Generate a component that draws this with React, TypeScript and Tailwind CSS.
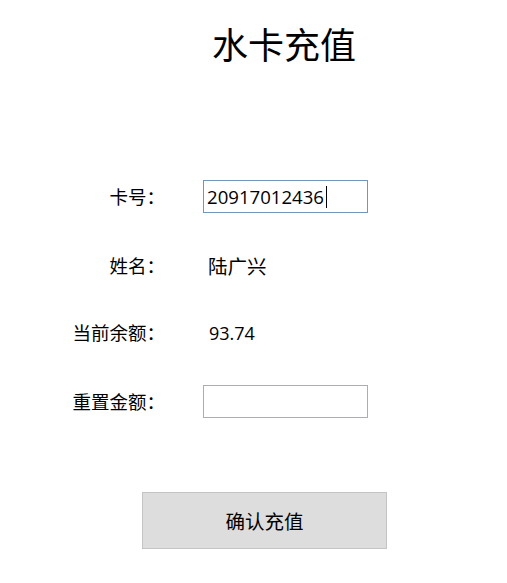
export default function App() {
  const font = { fontFamily: '"Noto Sans CJK SC", sans-serif' }

  return (
    <div className="w-[507px] h-[583px] bg-white text-black" style={font}>
      {/* 标题 */}
      <div className="pt-[20px] pl-[212px] h-[180px]">
        <h1 className="text-[36px] leading-[46px] font-normal">水卡充值</h1>
      </div>

      <div className="flex flex-col">
        {/* 卡号 */}
        <div className="flex items-center h-[33px]">
          <div className="w-[165px] text-right text-[18.5px] leading-none">卡号：</div>
          <div className="ml-[38px] w-[165px] h-[33px] border border-[#569de5] flex items-center pl-[3px] text-[18.6px] font-['Open_Sans',sans-serif]">
            <span>20917012436</span>
            <span className="w-px h-[22px] bg-black ml-[2px]" />
          </div>
        </div>

        {/* 姓名 */}
        <div className="flex items-center h-[33px] mt-[36px]">
          <div className="w-[165px] text-right text-[18.5px] leading-none">姓名：</div>
          <div className="ml-[43px] text-[19.5px] leading-none">陆广兴</div>
        </div>

        {/* 当前余额 */}
        <div className="flex items-center h-[33px] mt-[34px]">
          <div className="w-[165px] text-right text-[18.5px] leading-none">当前余额：</div>
          <div className="ml-[44px] text-[18px] leading-none font-['Open_Sans',sans-serif]">93.74</div>
        </div>

        {/* 重置金额 */}
        <div className="flex items-center h-[33px] mt-[36px]">
          <div className="w-[165px] text-right text-[18.5px] leading-none">重置金额：</div>
          <div className="ml-[38px] w-[165px] h-[33px] border border-[#abadb3]" />
        </div>

        {/* 按钮 */}
        <div className="mt-[74px] pl-[142px]">
          <button className="w-[245px] h-[57px] bg-[#dddddd] border border-[#c4c4c4] text-[19.5px]">
            确认充值
          </button>
        </div>
      </div>
    </div>
  )
}
